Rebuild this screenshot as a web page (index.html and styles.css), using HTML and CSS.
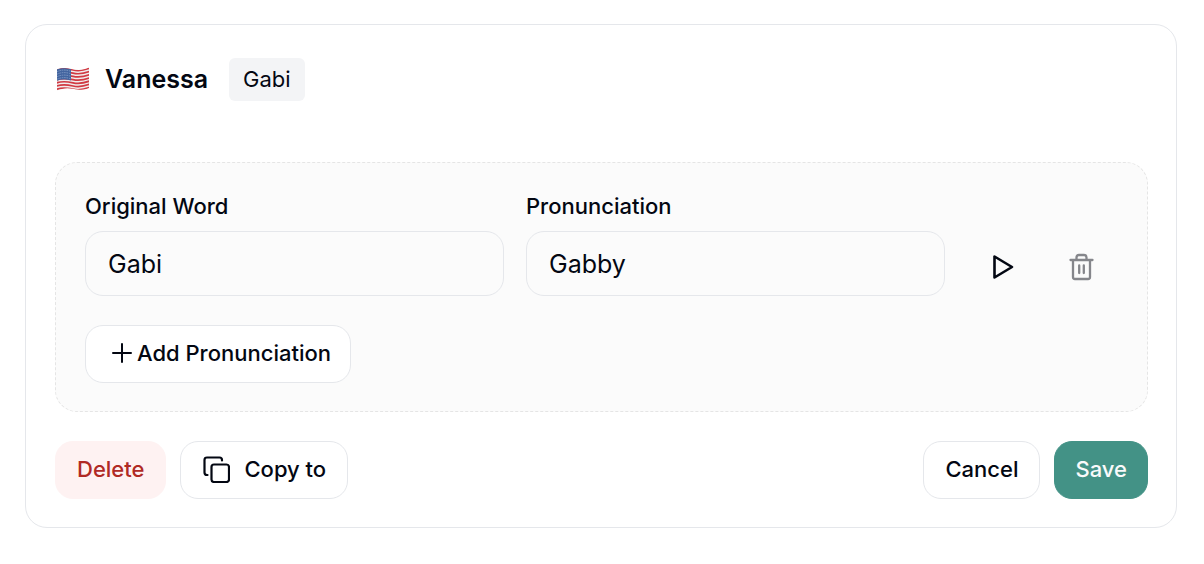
FILE: index.html
```html
<!DOCTYPE html>
<html lang="en">
<head>
<meta charset="utf-8">
<meta name="viewport" content="width=device-width, initial-scale=1">
<title>Pronunciations</title>
<link rel="stylesheet" href="styles.css">
</head>
<body>
<main class="card">
  <header class="card-header">
    <svg class="flag" viewBox="0 0 34 26" role="img" aria-label="United States">
      <defs>
        <clipPath id="flag-shape"><path d="M1 2.400C5 .6 10 .8 17 2.300S28 2.600 33 .5V21C28 23.200 24 23 17 21.700S6 21.500 1 23.500Z"/></clipPath>
      </defs>
      <g clip-path="url(#flag-shape)">
        <rect width="34" height="26" fill="#f1eeee"/>
        <g class="flag-stripes">
          <path d="M0 3.300C6 1 10 1.500 17 3S28 3.400 34 1.100"/>
          <path d="M0 6.500C6 4.200 10 4.700 17 6.200S28 6.600 34 4.300"/>
          <path d="M0 9.700C6 7.400 10 7.900 17 9.400S28 9.800 34 7.500"/>
          <path d="M0 12.900C6 10.600 10 11.100 17 12.600S28 13 34 10.700"/>
          <path d="M0 16.100C6 13.800 10 14.300 17 15.800S28 16.200 34 13.900"/>
          <path d="M0 19.300C6 17 10 17.500 17 19S28 19.400 34 17.100"/>
          <path d="M0 22.500C6 20.200 10 20.700 17 22.200S28 22.600 34 20.300"/>
        </g>
        <path d="M0 2.400C5 .6 9 1 15 2V13.600C9 12.300 5 12.100 0 14Z" fill="#42649f"/>
        <path class="flag-stars" d="M1.500 4.500Q7 2 14 4M1.500 7Q7 4.500 14 6.500M1.500 9.500Q7 7 14 9M1.500 12Q7 9.500 14 11.500"/>
      </g>
    </svg>
    <h1 class="name">Vanessa</h1>
    <span class="tag">Gabi</span>
  </header>

  <section class="panel">
    <div class="entry">
      <div class="field">
        <label class="label" for="word">Original Word</label>
        <input class="input" id="word" type="text" value="Gabi">
      </div>
      <div class="field">
        <label class="label" for="pronunciation">Pronunciation</label>
        <input class="input" id="pronunciation" type="text" value="Gabby">
      </div>
      <div class="entry-actions">
        <button class="icon-button" type="button" aria-label="Play">
          <svg class="icon" viewBox="0 0 28 28"><path d="M5.500 3.500V24.500L23 14Z" stroke-width="2.600"/></svg>
        </button>
        <button class="icon-button muted" type="button" aria-label="Remove">
          <svg class="icon" viewBox="0 0 28 28"><path d="M2.500 7H24.500M5 7V24Q5 26 7 26H20Q22 26 22 24V7M8.500 7V4.500Q8.500 2 11 2H16Q18.500 2 18.500 4.500V7M11.200 12.500V20M15.800 12.500V20" stroke-width="2.300"/></svg>
        </button>
      </div>
    </div>
    <button class="button add" type="button">
      <svg class="plus" viewBox="0 0 22 22"><path d="M11 2V20M2 11H20" stroke-width="2"/></svg>
      Add Pronunciation
    </button>
  </section>

  <footer class="card-footer">
    <button class="button delete" type="button">Delete</button>
    <button class="button copy" type="button">
      <svg class="icon" viewBox="0 0 28 28"><rect x="9.500" y="9.500" width="17.500" height="17.500" rx="2.500" stroke-width="2.200"/><path d="M5.500 20H5Q2.500 20 2.500 17.500V5Q2.500 2.500 5 2.500H17.500Q20 2.500 20 5V5.500" stroke-width="2.200"/></svg>
      Copy to
    </button>
    <button class="button cancel" type="button">Cancel</button>
    <button class="button save" type="button">Save</button>
  </footer>
</main>
</body>
</html>
```
FILE: styles.css
```css
* {
  box-sizing: border-box;
}

body {
  margin: 0;
  padding: 24px 27px 36px 25px;
  background: #fff;
  color: #030712;
  font-family: Inter, "Liberation Sans", sans-serif;
}

button,
input {
  font: inherit;
  color: inherit;
}

svg {
  flex: none;
  fill: none;
  stroke: currentColor;
  stroke-linecap: round;
  stroke-linejoin: round;
}

.card {
  padding: 33px 28px 28px 29px;
  border: 1px solid #e5e7eb;
  border-radius: 22px;
}

.card-header {
  display: flex;
  align-items: center;
  margin-bottom: 61px;
}

.flag {
  width: 34px;
  height: 26px;
  margin: 0 15px 0 1px;
  stroke: none;
}

.flag-stripes {
  stroke: #d13a43;
  stroke-width: 1.7;
}

.flag-stars {
  stroke: #8ba3cc;
  stroke-width: 0.8;
  stroke-dasharray: 0.8 1.6;
}

.name {
  margin: 0 21px 0 0;
  padding-bottom: 2px;
  font-size: 25px;
  line-height: 36px;
  font-weight: 600;
}

.tag {
  padding: 7px 14px;
  border-radius: 6px;
  background: #f3f4f6;
  font-size: 22px;
  line-height: 29px;
}

.panel {
  margin-bottom: 29px;
  padding: 29px 29px 28px;
  border: 1px dashed #e5e5e5;
  border-radius: 22px;
  background: #fbfbfb;
}

.entry {
  display: flex;
  align-items: flex-end;
  gap: 22px;
  margin-bottom: 29px;
}

.field {
  display: flex;
  flex: 1;
  flex-direction: column;
  gap: 10px;
  min-width: 0;
}

.label {
  font-size: 22px;
  line-height: 29px;
  font-weight: 500;
}

.input {
  width: 100%;
  height: 65px;
  padding: 0 22px;
  border: 1px solid #e5e7eb;
  border-radius: 18px;
  background: transparent;
  font-size: 25px;
}

.entry-actions {
  display: flex;
  gap: 7px;
}

.icon-button {
  display: flex;
  align-items: center;
  justify-content: center;
  width: 72px;
  height: 58px;
  padding: 0;
  border: 0;
  background: none;
}

.icon {
  width: 28px;
  height: 28px;
}

.muted {
  color: #85868b;
}

.button {
  display: flex;
  align-items: center;
  height: 58px;
  padding: 0 21px 2px;
  border: 1px solid #e5e7eb;
  border-radius: 18px;
  background: #fff;
  font-size: 22px;
  font-weight: 500;
  white-space: nowrap;
}

.add {
  gap: 4px;
  padding-right: 19px;
  padding-left: 25px;
}

.plus {
  width: 22px;
  height: 22px;
}

.card-footer {
  display: flex;
  gap: 14px;
}

.delete {
  border-color: #fef2f2;
  background: #fef2f2;
  color: #b02a25;
}

.copy {
  gap: 14px;
}

.cancel {
  margin-left: auto;
}

.save {
  padding-right: 20px;
  padding-left: 20px;
  border-color: #439286;
  background: #439286;
  color: #f9fafb;
}
```
